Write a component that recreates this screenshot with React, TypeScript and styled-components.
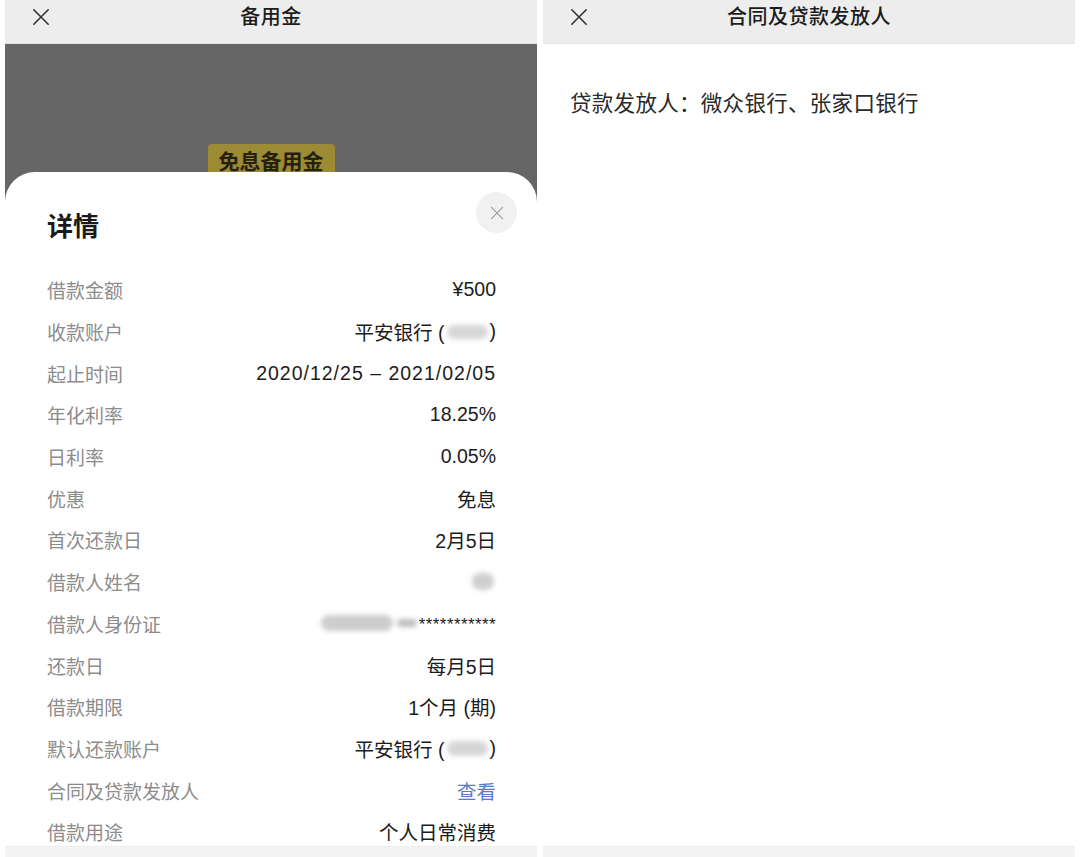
import styled, { createGlobalStyle } from "styled-components";

const GlobalStyle = createGlobalStyle`
  html, body {
    margin: 0;
    padding: 0;
    background: #ffffff;
  }
  body {
    font-family: "Liberation Sans", "Noto Sans CJK SC", sans-serif;
    -webkit-font-smoothing: antialiased;
  }
`;

const Page = styled.div`
  display: flex;
  gap: 6px;
  width: 1080px;
  height: 857px;
  padding-left: 5px;
  box-sizing: border-box;
  overflow: hidden;
`;

const Screen = styled.div<{ $dim?: boolean }>`
  width: 532px;
  height: 857px;
  display: flex;
  flex-direction: column;
  background: ${({ $dim }) => ($dim ? "#666666" : "#ffffff")};
  overflow: hidden;
`;

const NavBar = styled.div`
  height: 44px;
  flex: none;
  box-sizing: border-box;
  padding-bottom: 10px;
  display: grid;
  grid-template-columns: 72px 1fr 72px;
  align-items: center;
  background: #ededed;
  border-bottom: 1px solid #e2e2e2;
`;

const NavClose = styled.div`
  display: flex;
  justify-content: center;
  color: #333;
`;

const NavTitle = styled.div`
  text-align: center;
  font-size: 20px;
  line-height: 24px;
  font-weight: 500;
  color: #1c1c1c;
  letter-spacing: 0.5px;
`;

const Backdrop = styled.div`
  height: 128px;
  flex: none;
  display: flex;
  justify-content: center;
  align-items: flex-end;
  overflow: hidden;
`;

const Tag = styled.div`
  height: 26px;
  padding: 2px 11px 0;
  background: #9c8a34;
  border-radius: 4px 4px 0 0;
  font-size: 21px;
  font-weight: 700;
  line-height: 32px;
  color: #26210f;
  overflow: hidden;
`;

const Sheet = styled.div`
  flex: 1;
  min-height: 0;
  background: #ffffff;
  border-radius: 30px 30px 0 0;
  padding: 20px 41px 0 42px;
  overflow: hidden;
`;

const SheetHead = styled.div`
  display: flex;
  justify-content: space-between;
  align-items: flex-start;
  margin-bottom: 24px;
`;

const SheetTitle = styled.h2`
  margin: 17px 0 0 0;
  font-size: 26px;
  line-height: 36px;
  font-weight: 700;
  color: #1a1a1a;
`;

const CircleClose = styled.div`
  width: 41px;
  height: 41px;
  border-radius: 50%;
  background: #f1f1f1;
  margin-right: -21px;
  display: flex;
  align-items: center;
  justify-content: center;
  color: #9a9a9a;
`;

const Row = styled.div`
  height: 41.7px;
  display: flex;
  justify-content: space-between;
  align-items: center;
  font-size: 19px;
`;

const Label = styled.span`
  color: #8c8c8c;
`;

const Value = styled.span<{ $link?: boolean; $spaced?: boolean }>`
  display: flex;
  align-items: center;
  color: ${({ $link }) => ($link ? "#5a7ac4" : "#1c1c1c")};
  font-size: 19.5px;
  letter-spacing: ${({ $spaced }) => ($spaced ? "1px" : "0")};
`;

const Smudge = styled.span<{ $w: number; $h: number; $tone?: string }>`
  display: inline-block;
  width: ${({ $w }) => $w}px;
  height: ${({ $h }) => $h}px;
  margin: 0 2px;
  border-radius: 8px;
  background: ${({ $tone }) => $tone ?? "#d6d6d6"};
  filter: blur(2.5px);
`;

const Stars = styled.span`
  font-size: 17px;
  letter-spacing: 0.4px;
  transform: translateY(2px);
`;

const BottomBar = styled.div`
  height: 10px;
  flex: none;
  background: #f4f4f4;
  border-top: 1px solid #ececec;
`;

const Body = styled.div`
  flex: 1;
  padding: 42px 27px 0;
  font-size: 21.5px;
  color: #2a2a2a;
  letter-spacing: 0.3px;
`;

const CrossIcon = ({ size, stroke }: { size: number; stroke: number }) => (
  <svg width={size} height={size} viewBox="0 0 20 20" fill="none">
    <path d="M2 2 L18 18 M18 2 L2 18" stroke="currentColor" strokeWidth={stroke} strokeLinecap="round" />
  </svg>
);

type Item = { label: string; value: React.ReactNode; link?: boolean; spaced?: boolean };

const items: Item[] = [
  { label: "借款金额", value: "¥500" },
  {
    label: "收款账户",
    value: (
      <>
        平安银行 (<Smudge $w={41} $h={14} />)
      </>
    ),
  },
  { label: "起止时间", value: "2020/12/25 – 2021/02/05", spaced: true },
  { label: "年化利率", value: "18.25%" },
  { label: "日利率", value: "0.05%" },
  { label: "优惠", value: "免息" },
  { label: "首次还款日", value: "2月5日" },
  { label: "借款人姓名", value: <Smudge $w={22} $h={17} $tone="#cfcfcf" /> },
  {
    label: "借款人身份证",
    value: (
      <>
        <Smudge $w={72} $h={16} $tone="#cdcdcd" />
        <Smudge $w={20} $h={8} $tone="#bdbdbd" />
        <Stars>***********</Stars>
      </>
    ),
  },
  { label: "还款日", value: "每月5日" },
  { label: "借款期限", value: "1个月 (期)" },
  {
    label: "默认还款账户",
    value: (
      <>
        平安银行 (<Smudge $w={41} $h={15} />)
      </>
    ),
  },
  { label: "合同及贷款发放人", value: "查看", link: true },
  { label: "借款用途", value: "个人日常消费" },
];

export default function App() {
  return (
    <>
      <GlobalStyle />
      <Page>
        <Screen $dim>
          <NavBar>
            <NavClose>
              <CrossIcon size={18} stroke={1.8} />
            </NavClose>
            <NavTitle>备用金</NavTitle>
            <span />
          </NavBar>
          <Backdrop>
            <Tag>免息备用金</Tag>
          </Backdrop>
          <Sheet>
            <SheetHead>
              <SheetTitle>详情</SheetTitle>
              <CircleClose>
                <CrossIcon size={14} stroke={1.6} />
              </CircleClose>
            </SheetHead>
            {items.map((it) => (
              <Row key={it.label}>
                <Label>{it.label}</Label>
                <Value $link={it.link} $spaced={it.spaced}>
                  {it.value}
                </Value>
              </Row>
            ))}
          </Sheet>
          <BottomBar />
        </Screen>
        <Screen>
          <NavBar>
            <NavClose>
              <CrossIcon size={18} stroke={1.8} />
            </NavClose>
            <NavTitle>合同及贷款发放人</NavTitle>
            <span />
          </NavBar>
          <Body>贷款发放人：微众银行、张家口银行</Body>
          <BottomBar />
        </Screen>
      </Page>
    </>
  );
}
